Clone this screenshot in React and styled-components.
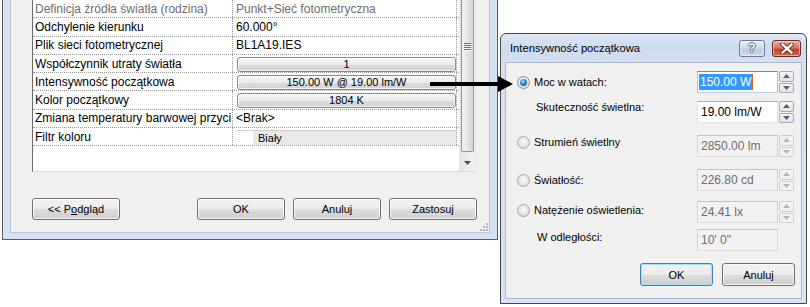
import React from "react";
import styled, { createGlobalStyle, css } from "styled-components";

const GlobalStyle = createGlobalStyle`
  html, body { margin: 0; padding: 0; background: #fff; }
  body { font-family: "Liberation Sans", Arial, sans-serif; font-size: 11px; color: #000; }
  * { box-sizing: border-box; }
`;

const FRAME = "#d7e3f2";

const rows = [
  { label: "Definicja źródła światła (rodzina)", value: "Punkt+Sieć fotometryczna", kind: "text", muted: true },
  { label: "Odchylenie kierunku", value: "60.000°", kind: "text" },
  { label: "Plik sieci fotometrycznej", value: "BL1A19.IES", kind: "text" },
  { label: "Współczynnik utraty światła", value: "1", kind: "button" },
  { label: "Intensywność początkowa", value: "150.00 W @ 19.00 lm/W", kind: "button" },
  { label: "Kolor początkowy", value: "1804 K", kind: "button" },
  { label: "Zmiana temperatury barwowej przyci", value: "<Brak>", kind: "text" },
  { label: "Filtr koloru", value: "Biały", kind: "color" },
];

const Desktop = styled.div`
  position: relative;
  width: 810px;
  height: 307px;
  overflow: hidden;
  background: #fff;
`;

/* ---------- main (background) window ---------- */

const MainWindow = styled.div`
  position: absolute;
  left: 2px;
  top: 0;
  width: 496px;
  height: 240px;
  border: 1px solid #5b5b5b;
  border-top: none;
  background: ${FRAME};
  padding: 0 7px 6px;
`;

const Client = styled.div`
  position: relative;
  height: 100%;
  background: #f0f0f0;
  border: 1px solid #b5c5da;
  border-top: none;
  padding: 0 13px 0 21px;
  display: flex;
  flex-direction: column;
`;

const PropertyGrid = styled.div`
  display: flex;
  height: 172px;
  background: #fff;
  border-left: 1px solid #6b6b6b;
  border-bottom: 1px solid #dadada;
  border-right: 1px solid #e4e4e4;
`;

const Table = styled.div`
  flex: 1;
  margin-top: -1px;
  border-top: 1px solid #b6cbe4;
`;

const PropRow = styled.div`
  display: grid;
  grid-template-columns: 200px 224px;
  height: 18.3px;
  border-bottom: 1px dotted #9a9a9a;
  font-size: 12px;
  color: ${p => (p.$muted ? "#6d6d6d" : "#000")};
`;

const Cell = styled.div`
  display: flex;
  align-items: center;
  white-space: nowrap;
  overflow: hidden;
  border-right: 1px dotted #9a9a9a;
  padding-left: ${p => p.$pad}px;
`;

const ValueButton = styled.div`
  flex: 1;
  height: 15px;
  margin: 1px 0 0 0;
  border: 1px solid #8a8a8a;
  border-radius: 3px;
  background: linear-gradient(#f6f6f6 0%, #ebebeb 50%, #dcdcdc 51%, #d2d2d2 100%);
  box-shadow: inset 0 0 0 1px rgba(255, 255, 255, 0.7);
  display: flex;
  align-items: center;
  justify-content: center;
  font-size: 11px;
  line-height: 1;
`;

const ColorValue = styled.div`
  flex: 1;
  height: 15px;
  margin-top: 1px;
  display: flex;
  border-top: 1px solid #cfcfcf;
`;

const Swatch = styled.div`
  width: 16px;
  background: #fff;
`;

const ColorName = styled.div`
  flex: 1;
  background: #e9e9e9;
  padding-left: 5px;
  display: flex;
  align-items: center;
  font-size: 11px;
`;

const Scrollbar = styled.div`
  width: 16px;
  display: flex;
  flex-direction: column;
  background: linear-gradient(90deg, #e4e4e4, #f3f3f3);
  border-left: 1px solid #ececec;
`;

const Thumb = styled.div`
  height: 152px;
  margin: 0 1px;
  border: 1px solid #959595;
  border-top: none;
  border-radius: 0 0 2px 2px;
  background: linear-gradient(90deg, #f4f4f4 0%, #e6e6e6 45%, #d4d4d4 100%);
  display: flex;
  justify-content: center;
  padding-top: 43px;
`;

const Grip = styled.div`
  width: 7px;
  height: 8px;
  background: repeating-linear-gradient(#6f6f6f 0 1px, #fafafa 1px 2px);
`;

const ArrowButton = styled.div`
  flex: 1;
  display: flex;
  align-items: flex-end;
  justify-content: center;
  padding-bottom: 6px;
`;

const ButtonRow = styled.div`
  display: flex;
  gap: 8px;
  margin: 26px -1px 0 0;
`;

const Spacer = styled.div`
  flex: 1;
`;

const WinButton = styled.button`
  width: ${p => p.$w}px;
  height: ${p => p.$h}px;
  padding: 0;
  border: 1px solid ${p => (p.$default ? "#3c7fb1" : "#707070")};
  border-radius: 3px;
  background: linear-gradient(#f2f2f2 0%, #ebebeb 50%, #dddddd 51%, #cfcfcf 100%);
  box-shadow: inset 0 0 0 1px ${p => (p.$default ? "#9fe3fb" : "rgba(255,255,255,0.75)")};
  font: 11px "Liberation Sans", Arial, sans-serif;
  color: #000;
`;

const ResizeGrip = styled.svg`
  position: absolute;
  right: 1px;
  bottom: 1px;
`;

/* ---------- dialog ---------- */

const Dialog = styled.div`
  position: absolute;
  left: 500px;
  top: 33px;
  width: 307px;
  height: 271px;
  border: 1px solid #474747;
  border-radius: 6px 6px 0 0;
  background: linear-gradient(#dfe9f6 0px, #cddbee 14px, #d5e1f1 28px, ${FRAME} 100%);
  display: flex;
  flex-direction: column;
`;

const TitleBar = styled.div`
  height: 28px;
  display: flex;
  align-items: center;
  padding: 0 5px 0 9px;
  gap: 7px;
`;

const Title = styled.div`
  flex: 1;
  font-size: 11.2px;
  color: #000;
`;

const CaptionButton = styled.div`
  width: ${p => p.$w}px;
  height: 17px;
  border: 1px solid ${p => (p.$close ? "#6b2a22" : "#6b7d96")};
  border-radius: 3px;
  background: ${p =>
    p.$close
      ? "linear-gradient(#e8a99b 0%, #d77a66 45%, #c0452e 55%, #cf6a4f 100%)"
      : "linear-gradient(#e9f0f8 0%, #d3deec 45%, #bccbe0 55%, #cdd9e9 100%)"};
  box-shadow: inset 0 0 0 1px rgba(255, 255, 255, 0.45);
  display: flex;
  align-items: center;
  justify-content: center;
`;

const HelpGlyph = styled.span`
  font: bold 12px "Liberation Sans", Arial, sans-serif;
  color: #fff;
  text-shadow: -1px 0 #5b6b80, 1px 0 #5b6b80, 0 -1px #5b6b80, 0 1px #5b6b80;
  line-height: 1;
`;

const DialogClient = styled.div`
  flex: 1;
  margin: 0 4px 4px;
  background: #f0f0f0;
  border: 1px solid #a9b9cf;
  padding-top: 8px;
  display: flex;
  flex-direction: column;
`;

const FieldRow = styled.div`
  display: grid;
  grid-template-columns: 1fr 81px 15px;
  column-gap: 1px;
  height: 22px;
  margin-top: ${p => p.$gap}px;
  padding-right: 7px;
`;

const FieldLabel = styled.div`
  display: flex;
  align-items: center;
  gap: 4px;
  height: 13px;
  line-height: 13px;
  white-space: nowrap;
  margin-top: ${p => p.$top}px;
  padding-left: ${p => p.$indent}px;
`;

const Radio = styled.span`
  position: relative;
  width: 13px;
  height: 13px;
  border-radius: 50%;
  flex: none;
  border: 1px solid ${p => (p.$checked ? "#8e8f8f" : "#a9a9a9")};
  background: ${p =>
    p.$checked
      ? "radial-gradient(circle at 50% 40%, #ffffff, #d6d6d6)"
      : "radial-gradient(circle at 50% 40%, #fbfbfb, #d2d2d2)"};
  ${p =>
    p.$checked &&
    css`
      &::after {
        content: "";
        position: absolute;
        left: 2px;
        top: 2px;
        width: 7px;
        height: 7px;
        border-radius: 50%;
        background: radial-gradient(circle at 40% 35%, #9fdcff 0%, #2f86cc 45%, #0d3f87 100%);
      }
    `}
`;

const TextField = styled.div`
  height: 22px;
  border: 1px solid;
  border-color: ${p =>
    p.$disabled
      ? "#c4c4c4 #d4d4d4 #dcdcdc #d4d4d4"
      : p.$focused
      ? "#5c93bc #a4c3de #b7d4ec #a4c3de"
      : "#abadb3 #dbdfe6 #e3e9ef #e2e3ea"};
  background: ${p => (p.$disabled ? "#f2f2f2" : "#fff")};
  color: ${p => (p.$disabled ? "#6d6d6d" : "#000")};
  font-size: 12px;
  padding-left: ${p => (p.$focused ? 1 : 3)}px;
  display: flex;
  align-items: center;
  white-space: nowrap;
  overflow: hidden;
`;

const Selected = styled.span`
  background: #3399ff;
  color: #fff;
  padding: 1px;
  border-right: 1px solid #c86a16;
`;

const Spinner = styled.div`
  display: flex;
  flex-direction: column;
  gap: 1px;
`;

const SpinButton = styled.div`
  flex: 1;
  border: 1px solid ${p => (p.$disabled ? "#cfcfcf" : "#a9a9a9")};
  border-radius: 2px;
  background: ${p => (p.$disabled ? "#f3f3f3" : "linear-gradient(#f7f7f7, #e3e3e3)")};
  display: flex;
  align-items: center;
  justify-content: center;
`;

const DialogButtons = styled.div`
  display: flex;
  justify-content: flex-end;
  gap: 9px;
  margin-top: 12px;
  padding-right: 6px;
`;

const ArrowOverlay = styled.svg`
  position: absolute;
  left: 428px;
  top: 75px;
  z-index: 5;
`;

const Triangle = ({ up, color }) => (
  <svg width="7" height="4" viewBox="0 0 7 4">
    <polygon points={up ? "0,4 7,4 3.5,0" : "0,0 7,0 3.5,4"} fill={color} />
  </svg>
);

const Spin = ({ disabled }) => {
  const color = disabled ? "#b5b5b5" : "#4a6287";
  return (
    <Spinner>
      <SpinButton $disabled={disabled}>
        <Triangle up color={color} />
      </SpinButton>
      <SpinButton $disabled={disabled}>
        <Triangle color={color} />
      </SpinButton>
    </Spinner>
  );
};

const fields = [
  { gap: 0, top: 5, radio: true, checked: true, label: "Moc w watach:", value: "150.00 W", focused: true },
  { gap: 8, top: 0, label: "Skuteczność świetlna:", value: "19.00 lm/W" },
  { gap: 12, top: 1, radio: true, label: "Strumień świetlny", value: "2850.00 lm", disabled: true },
  { gap: 12, top: 5, radio: true, label: "Światłość:", value: "226.80 cd", disabled: true },
  { gap: 10, top: 3, radio: true, label: "Natężenie oświetlenia:", value: "24.41 lx", disabled: true },
  { gap: 6, top: 2, label: "W odległości:", value: "10'  0\"", disabled: true, noSpin: true, indent: 31 },
];

const PropertyValue = ({ row }) => {
  if (row.kind === "button") {
    return (
      <Cell $pad={4}>
        <ValueButton>{row.value}</ValueButton>
      </Cell>
    );
  }
  if (row.kind === "color") {
    return (
      <Cell $pad={4}>
        <ColorValue>
          <Swatch />
          <ColorName>{row.value}</ColorName>
        </ColorValue>
      </Cell>
    );
  }
  return <Cell $pad={3}>{row.value}</Cell>;
};

export default function App() {
  return (
    <Desktop>
      <GlobalStyle />
      <MainWindow>
        <Client>
          <PropertyGrid>
            <Table>
              {rows.map(r => (
                <PropRow key={r.label} $muted={r.muted}>
                  <Cell $pad={2}>{r.label}</Cell>
                  <PropertyValue row={r} />
                </PropRow>
              ))}
            </Table>
            <Scrollbar>
              <Thumb>
                <Grip />
              </Thumb>
              <ArrowButton>
                <Triangle color="#505050" />
              </ArrowButton>
            </Scrollbar>
          </PropertyGrid>
          <ButtonRow>
            <WinButton $w={88} $h={22}>
              &lt;&lt; P<u>o</u>dgląd
            </WinButton>
            <Spacer />
            <WinButton $w={88} $h={22}>OK</WinButton>
            <WinButton $w={88} $h={22}>Anuluj</WinButton>
            <WinButton $w={88} $h={22}>Zastosuj</WinButton>
          </ButtonRow>
          <ResizeGrip width="8" height="8" viewBox="0 0 8 8">
            {[[6, 0], [6, 3], [3, 3], [6, 6], [3, 6], [0, 6]].map(([x, y]) => (
              <rect key={`${x}-${y}`} x={x} y={y} width="2" height="2" fill="#b9b9b9" />
            ))}
          </ResizeGrip>
        </Client>
      </MainWindow>

      <Dialog>
        <TitleBar>
          <Title>Intensywność początkowa</Title>
          <CaptionButton $w={26}>
            <HelpGlyph>?</HelpGlyph>
          </CaptionButton>
          <CaptionButton $w={29} $close>
            <svg width="14" height="11" viewBox="0 0 14 11">
              <path d="M2.5 1.5 L11.5 9.5 M11.5 1.5 L2.5 9.5" stroke="#5a1d14" strokeWidth="4.2" strokeLinecap="square" />
              <path d="M2.5 1.5 L11.5 9.5 M11.5 1.5 L2.5 9.5" stroke="#fff" strokeWidth="2.4" strokeLinecap="square" />
            </svg>
          </CaptionButton>
        </TitleBar>
        <DialogClient>
          {fields.map(f => (
            <FieldRow key={f.label} $gap={f.gap}>
              <FieldLabel $top={f.top} $indent={f.radio ? 11 : f.indent || 30}>
                {f.radio && <Radio $checked={f.checked} />}
                {f.label}
              </FieldLabel>
              <TextField $disabled={f.disabled} $focused={f.focused}>
                {f.focused ? <Selected>{f.value}</Selected> : f.value}
              </TextField>
              {f.noSpin ? <span /> : <Spin disabled={f.disabled} />}
            </FieldRow>
          ))}
          <DialogButtons>
            <WinButton $w={73} $h={23} $default>OK</WinButton>
            <WinButton $w={73} $h={23}>Anuluj</WinButton>
          </DialogButtons>
        </DialogClient>
      </Dialog>

      <ArrowOverlay width="88" height="19" viewBox="0 0 88 19">
        <rect x="2" y="7" width="72" height="4" fill="#000" />
        <polygon points="70,1 85,9 70,17" fill="#000" />
      </ArrowOverlay>
    </Desktop>
  );
}
